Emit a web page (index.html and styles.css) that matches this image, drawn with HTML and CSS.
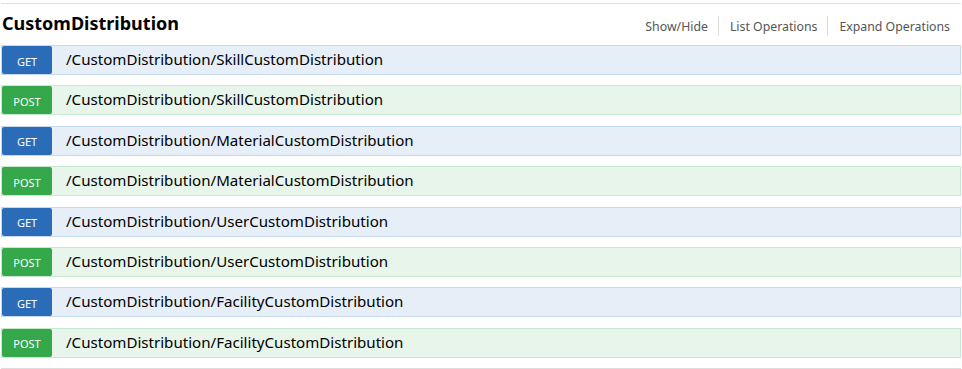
FILE: index.html
```html
<!DOCTYPE html>
<html>
<head>
    <title>CustomDistribution</title>
    <link rel="stylesheet" href="styles.css">
</head>
<body>
    <div class="resource">
        <div class="heading">
            <h2>CustomDistribution</h2>
            <ul class="options">
                <li><a href="#">Show/Hide</a></li>
                <li><a href="#">List Operations</a></li>
                <li><a href="#">Expand Operations</a></li>
            </ul>
        </div>
        <ul class="endpoints">
            <li class="op get"><span class="method">GET</span><span class="path">/CustomDistribution/SkillCustomDistribution</span></li>
            <li class="op post"><span class="method">POST</span><span class="path">/CustomDistribution/SkillCustomDistribution</span></li>
            <li class="op get"><span class="method">GET</span><span class="path">/CustomDistribution/MaterialCustomDistribution</span></li>
            <li class="op post"><span class="method">POST</span><span class="path">/CustomDistribution/MaterialCustomDistribution</span></li>
            <li class="op get"><span class="method">GET</span><span class="path">/CustomDistribution/UserCustomDistribution</span></li>
            <li class="op post"><span class="method">POST</span><span class="path">/CustomDistribution/UserCustomDistribution</span></li>
            <li class="op get"><span class="method">GET</span><span class="path">/CustomDistribution/FacilityCustomDistribution</span></li>
            <li class="op post"><span class="method">POST</span><span class="path">/CustomDistribution/FacilityCustomDistribution</span></li>
        </ul>
    </div>
</body>
</html>
```

FILE: styles.css
```css
/* swagger-like resource listing */
body {
    margin: 0;
    font-family: 'Noto Sans', 'Open Sans', sans-serif;
    background: #fff;
    color: #000;
}

.resource {
    margin: 3px 1px 0;
    border-top: 1px solid #ddd;
    border-bottom: 1px solid #ddd;
    padding-bottom: 10px;
}

.heading {
    display: flex;
    justify-content: space-between;
    align-items: center;
    height: 41px;
}

.heading h2 {
    margin: 0 0 3px 1px;
    font-size: 18px;
    font-weight: bold;
    color: #000;
}

.options {
    list-style: none;
    margin: 2px 0 0;
    padding: 0 11px 0 0;
    display: flex;
}

.options li {
    border-right: 1px solid #ddd;
    padding: 0 10px 0 11px;
    line-height: 18px;
}

.options li:last-child {
    border-right: none;
    padding-right: 0;
}

.options a {
    font-size: 12.3px;
    color: #555;
    text-decoration: none;
}

.endpoints {
    list-style: none;
    margin: 0;
    padding: 0;
    display: flex;
    flex-direction: column;
    gap: 10.4px;
}

.op {
    display: flex;
    align-items: center;
    height: 28px;
    border: 1px solid;
}

.op.get {
    background: #e6eef7;
    border-color: #c5d9ee;
}

.op.post {
    background: #e7f5ea;
    border-color: #c6e9cf;
}

.method {
    width: 50px;
    height: 100%;
    display: flex;
    align-items: center;
    justify-content: center;
    padding-top: 2px;
    box-sizing: border-box;
    font-size: 11px;
    color: #fff;
    border-radius: 2px;
}

.get .method {
    background: #2b6cb9;
}

.post .method {
    background: #34a84a;
}

.path {
    margin: 0 0 2px 14px;
    font-size: 15.1px;
    color: #000;
}
```
